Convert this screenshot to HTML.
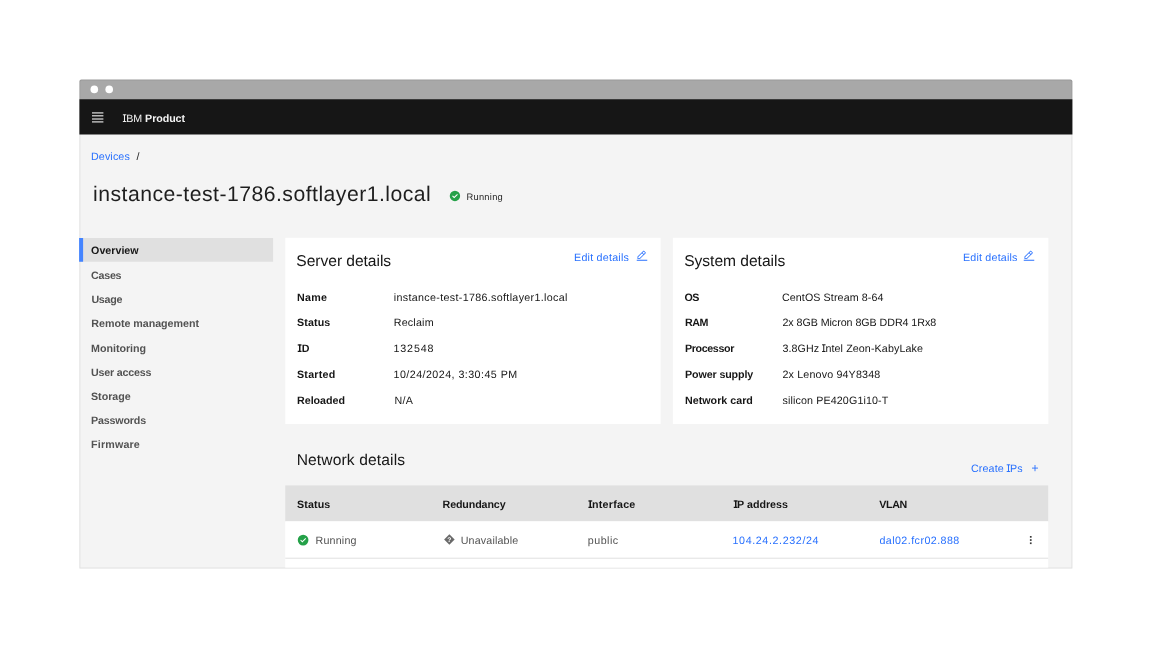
<!DOCTYPE html>
<html>
<head>
<meta charset="utf-8">
<title>Device details</title>
<style>
*{box-sizing:border-box;margin:0;padding:0}
html,body{width:1152px;height:648px;background:#fff;overflow:hidden}
body{font-family:"Liberation Sans",sans-serif;color:#161616}
#page{position:absolute;left:0;top:0;width:1152px;height:648px;will-change:transform;text-rendering:geometricPrecision}
.a{position:absolute}
.x{position:absolute;white-space:nowrap;line-height:1;color:#161616}
.r{font-size:10.7px}
.b{font-size:10.7px;font-weight:bold}
.h{font-size:15.6px}
.t{font-size:21.2px;color:#1e1e1e}
.s{font-size:9.3px;color:#262626}
.blue{color:#2870fe}
.gray{color:#525252}
.hd1{color:#f4f4f4}
.hd2{color:#f4f4f4}
svg{position:absolute;overflow:visible}
</style>
</head>
<body>
<div id="page">

<svg style="left:0;top:0" width="1152" height="648" viewBox="0 0 1152 648">
<rect x="79.4" y="99" width="993" height="469.500" fill="#dedede"/>
<rect x="80.300" y="99" width="991.200" height="468.600" fill="#f4f4f4"/>
<path d="M79.400 99.200V81.500a2 2 0 0 1 2-2h989a2 2 0 0 1 2 2V99.200z" fill="#9a9a9a"/>
<path d="M80.300 99.200V82a1.600 1.600 0 0 1 1.600-1.600h988a1.600 1.600 0 0 1 1.600 1.600V99.200z" fill="#a8a8a8"/>
<rect x="79.4" y="99.200" width="993" height="35.300" fill="#161616"/>
<circle cx="94.300" cy="89.400" r="3.800" fill="#fff"/>
<circle cx="109.200" cy="89.400" r="3.800" fill="#fff"/>
<g fill="#e0e0e0"><rect x="92" y="112.300" width="11.400" height="1.200"/><rect x="92" y="115.200" width="11.400" height="1.200"/><rect x="92" y="118.400" width="11.400" height="1.200"/><rect x="92" y="121.300" width="11.400" height="1.200"/></g>
<rect x="80" y="238" width="193.100" height="23.750" fill="#e0e0e0"/>
<rect x="79.100" y="238" width="4" height="23.750" fill="#4484ff"/>
<rect x="285.300" y="237.800" width="375.300" height="186.200" fill="#fff"/>
<rect x="672.900" y="237.800" width="375.500" height="186.200" fill="#fff"/>
<rect x="285.250" y="485.400" width="762.950" height="35.900" fill="#e0e0e0"/>
<rect x="285.250" y="521.300" width="762.950" height="46.300" fill="#fff"/>
<rect x="285.250" y="557.700" width="762.950" height="1" fill="#e0e0e0"/>
<rect x="122.86" y="114.34" width="3.48" height="0.95" fill="#f4f4f4"/>
<rect x="122.86" y="121.05" width="3.48" height="0.95" fill="#f4f4f4"/>
<rect x="297.74" y="344.34" width="3.80" height="1.25" fill="#161616"/>
<rect x="297.74" y="350.75" width="3.80" height="1.25" fill="#161616"/>
<rect x="822.06" y="344.34" width="3.48" height="0.95" fill="#161616"/>
<rect x="822.06" y="351.05" width="3.48" height="0.95" fill="#161616"/>
<rect x="1006.69" y="464.34" width="3.48" height="0.95" fill="#2870fe"/>
<rect x="1006.69" y="471.05" width="3.48" height="0.95" fill="#2870fe"/>
<rect x="588.42" y="500.34" width="3.80" height="1.25" fill="#161616"/>
<rect x="588.42" y="506.75" width="3.80" height="1.25" fill="#161616"/>
<rect x="733.74" y="500.34" width="3.80" height="1.25" fill="#161616"/>
<rect x="733.74" y="506.75" width="3.80" height="1.25" fill="#161616"/>
</svg>
<svg style="left:448.96px;top:190.06px" width="11.89" height="11.89" viewBox="0 0 16 16"><circle cx="8" cy="8" r="7" fill="#24a148"/><path fill="#fff" d="M7 11.100L4.200 8.300l.95-.9L7 9.250l3.950-3.900.95.900z"/></svg>
<svg style="left:635.80px;top:250.40px" width="12" height="12" viewBox="0 0 16 16"><path fill="#2870fe" d="M1 13h14v1.300H1zM12.700 4.500c.4-.4.4-1 0-1.400l-1.800-1.800c-.4-.4-1-.4-1.400 0l-7.500 7.500V12h3.200l7.500-7.500zM10.200 2l1.800 1.800-1.500 1.500-1.800-1.800L10.200 2zM3 11V9.200l5-5 1.800 1.800-5 5H3z"/></svg>
<svg style="left:1022.90px;top:250.30px" width="12" height="12" viewBox="0 0 16 16"><path fill="#2870fe" d="M1 13h14v1.300H1zM12.700 4.500c.4-.4.4-1 0-1.400l-1.800-1.800c-.4-.4-1-.4-1.400 0l-7.500 7.500V12h3.200l7.500-7.500zM10.200 2l1.800 1.800-1.500 1.500-1.800-1.800L10.200 2zM3 11V9.200l5-5 1.800 1.800-5 5H3z"/></svg>
<svg style="left:1031.900px;top:464.600px" width="6" height="6.200" viewBox="0 0 6 6.200"><path d="M3 0v6.200M0 3.100h6" stroke="#2870fe" stroke-width="0.900" fill="none"/></svg>
<svg style="left:297.39px;top:533.59px" width="12.23" height="12.23" viewBox="0 0 16 16"><circle cx="8" cy="8" r="7" fill="#24a148"/><path fill="#fff" d="M7 11.100L4.200 8.300l.95-.9L7 9.250l3.950-3.900.95.900z"/></svg>
<svg style="left:443.500px;top:534.300px" width="10.800" height="10.800" viewBox="0 0 16 16"><path fill="#6a6a6a" d="M8 0.200L15.800 8 8 15.800 0.200 8z"/><text x="8" y="11.600" font-size="10" font-weight="bold" fill="#fff" text-anchor="middle" font-family="Liberation Sans, sans-serif">?</text></svg>
<svg style="left:1028.650px;top:535.900px" width="4" height="9" viewBox="0 0 4 9"><g fill="#393939"><rect x="0.900" y="0" width="1.700" height="1.700"/><rect x="0.900" y="3.200" width="1.700" height="1.700"/><rect x="0.900" y="6.400" width="1.700" height="1.700"/></g></svg>

<header>
  <div id="ibm" class="x r hd1" style="left:123.12px;top:114px;letter-spacing:0.068px">IBM</div>
  <div id="prod" class="x b hd2" style="left:145.08px;top:114px;letter-spacing:-0.073px">Product</div>
</header>
<div class="pagehead">
  <div id="bc1" class="x r blue" style="left:90.94px;top:152px;letter-spacing:0.141px">Devices</div>
  <div id="bc2" class="x r" style="left:136.54px;top:152px;letter-spacing:0.000px">/</div>
  <div id="title" class="x t" style="left:93.07px;top:184px;letter-spacing:0.478px">instance-test-1786.softlayer1.local</div>
  <div id="run0" class="x s" style="left:466.54px;top:193px;letter-spacing:0.262px">Running</div>
</div>
<nav>
  <div id="n1" class="x b" style="left:91.12px;top:246px;letter-spacing:-0.003px">Overview</div>
  <div id="n2" class="x b gray" style="left:91.12px;top:271px;letter-spacing:-0.276px">Cases</div>
  <div id="n3" class="x b gray" style="left:91.38px;top:295px;letter-spacing:-0.225px">Usage</div>
  <div id="n4" class="x b gray" style="left:91.32px;top:319px;letter-spacing:-0.029px">Remote management</div>
  <div id="n5" class="x b gray" style="left:91.02px;top:344px;letter-spacing:-0.015px">Monitoring</div>
  <div id="n6" class="x b gray" style="left:91.09px;top:368px;letter-spacing:-0.212px">User access</div>
  <div id="n7" class="x b gray" style="left:91.02px;top:392px;letter-spacing:-0.031px">Storage</div>
  <div id="n8" class="x b gray" style="left:91.02px;top:416px;letter-spacing:-0.158px">Passwords</div>
  <div id="n9" class="x b gray" style="left:91.02px;top:440px;letter-spacing:0.181px">Firmware</div>
</nav>
<section class="server">
  <div id="h1" class="x h" style="left:296.36px;top:254px;letter-spacing:-0.044px">Server details</div>
  <div id="e1" class="x r blue" style="left:574.06px;top:253px;letter-spacing:0.232px">Edit details</div>
  <div id="l1" class="x b" style="left:297.04px;top:293px;letter-spacing:0.261px">Name</div>
  <div id="v1" class="x r" style="left:393.82px;top:293px;letter-spacing:0.336px">instance-test-1786.softlayer1.local</div>
  <div id="l2" class="x b" style="left:296.99px;top:318px;letter-spacing:0.125px">Status</div>
  <div id="v2" class="x r" style="left:393.78px;top:318px;letter-spacing:0.201px">Reclaim</div>
  <div id="l3" class="x b" style="left:298.16px;top:344px;letter-spacing:0.703px">ID</div>
  <div id="v3" class="x r" style="left:393.53px;top:344px;letter-spacing:0.858px">132548</div>
  <div id="l4" class="x b" style="left:296.99px;top:370px;letter-spacing:0.247px">Started</div>
  <div id="v4" class="x r" style="left:393.53px;top:370px;letter-spacing:0.454px">10/24/2024, 3:30:45 PM</div>
  <div id="l5" class="x b" style="left:297.04px;top:396px;letter-spacing:-0.020px">Reloaded</div>
  <div id="v5" class="x r" style="left:394.50px;top:396px;letter-spacing:0.310px">N/A</div>
</section>
<section class="system">
  <div id="h2" class="x h" style="left:684.20px;top:254px;letter-spacing:-0.031px">System details</div>
  <div id="e2" class="x r blue" style="left:962.94px;top:253px;letter-spacing:0.203px">Edit details</div>
  <div id="m1" class="x b" style="left:684.61px;top:293px;letter-spacing:-0.764px">OS</div>
  <div id="w1" class="x r" style="left:781.89px;top:293px;letter-spacing:0.109px">CentOS Stream 8-64</div>
  <div id="m2" class="x b" style="left:685.04px;top:318px;letter-spacing:-0.535px">RAM</div>
  <div id="w2" class="x r" style="left:782.43px;top:318px;letter-spacing:-0.049px">2x 8GB Micron 8GB DDR4 1Rx8</div>
  <div id="m3" class="x b" style="left:685.04px;top:344px;letter-spacing:-0.373px">Processor</div>
  <div id="w3" class="x r" style="left:782.39px;top:344px;letter-spacing:0.107px">3.8GHz Intel Zeon-KabyLake</div>
  <div id="m4" class="x b" style="left:685.04px;top:370px;letter-spacing:-0.116px">Power supply</div>
  <div id="w4" class="x r" style="left:782.43px;top:370px;letter-spacing:0.168px">2x Lenovo 94Y8348</div>
  <div id="m5" class="x b" style="left:685.04px;top:396px;letter-spacing:0.014px">Network card</div>
  <div id="w5" class="x r" style="left:782.50px;top:396px;letter-spacing:0.130px">silicon PE420G1i10-T</div>
</section>
<section class="network">
  <div id="h3" class="x h" style="left:296.66px;top:453px;letter-spacing:0.133px">Network details</div>
  <div id="cr" class="x r blue" style="left:971.04px;top:464px;letter-spacing:0.124px">Create IPs</div>
  <div id="th1" class="x b" style="left:296.99px;top:500px;letter-spacing:0.125px">Status</div>
  <div id="th2" class="x b" style="left:442.54px;top:500px;letter-spacing:-0.117px">Redundancy</div>
  <div id="th3" class="x b" style="left:588.83px;top:500px;letter-spacing:0.234px">Interface</div>
  <div id="th4" class="x b" style="left:734.16px;top:500px;letter-spacing:-0.010px">IP address</div>
  <div id="th5" class="x b" style="left:879.21px;top:500px;letter-spacing:-0.352px">VLAN</div>
  <div id="td1" class="x r gray" style="left:315.50px;top:536px;letter-spacing:0.194px">Running</div>
  <div id="td2" class="x r gray" style="left:460.74px;top:536px;letter-spacing:0.163px">Unavailable</div>
  <div id="td3" class="x r gray" style="left:587.77px;top:536px;letter-spacing:0.502px">public</div>
  <div id="td4" class="x r blue" style="left:732.53px;top:536px;letter-spacing:0.622px">104.24.2.232/24</div>
  <div id="td5" class="x r blue" style="left:879.39px;top:536px;letter-spacing:0.446px">dal02.fcr02.888</div>
</section>
</div>
</body>
</html>
